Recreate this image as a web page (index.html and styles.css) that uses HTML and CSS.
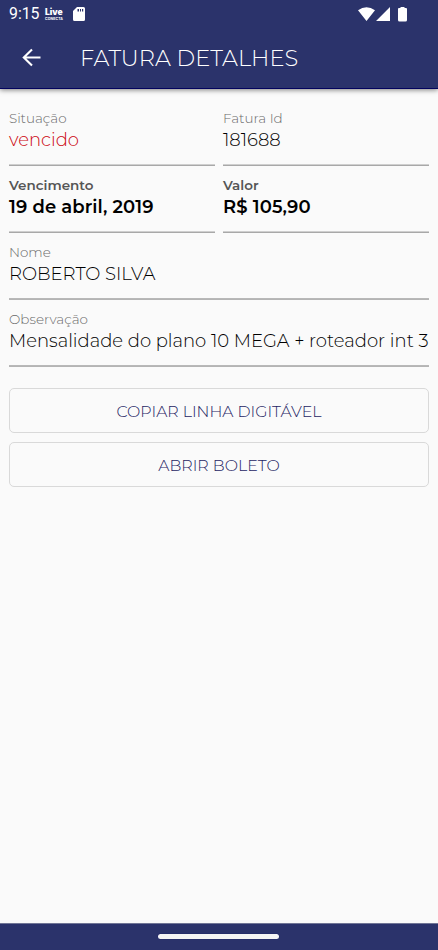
FILE: index.html
```html
<!DOCTYPE html>
<html lang="pt-BR">
<head>
<meta charset="utf-8">
<title>Fatura Detalhes</title>
<link rel="stylesheet" href="styles.css">
</head>
<body>
<div class="screen">
  <header class="header">
    <div class="status">
      <span class="clock">9:15</span>
      <span class="live"><b>Live</b><i>CONECTA</i></span>
      <svg class="sd" viewBox="0 0 12 14"><path fill="#fff" fill-rule="evenodd" d="M4 0h6.500Q12 0 12 1.500v11q0 1.500-1.500 1.500h-9Q0 14 0 12.500V4zM4.500 2v2.500H6V2zM7 2v2.500h1V2zM9 2v2.500h1.200V2z"/></svg>
      <svg class="signals" viewBox="0 0 50 15"><path fill="#fff" d="M0 3.200Q8.500-2.800 17 3.200L8.500 14zM18 14 32 0V14zM40 2q0-1 1-1h1.500V0h4v1H48q1 0 1 1v11q0 1.500-1.500 1.500h-6Q40 14.500 40 13z"/></svg>
    </div>
    <div class="toolbar">
      <svg class="back" viewBox="0 0 20 20"><path d="M10 1.500 1.800 9.500 10 17.500M2 9.500H18.500" fill="none" stroke="#fff" stroke-width="2.100"/></svg>
      <h1 class="title">FATURA DETALHES</h1>
    </div>
  </header>
  <main class="content">
    <section class="fields">
      <div class="field"><span class="label">Situação</span><span class="value overdue">vencido</span></div>
      <div class="field"><span class="label">Fatura Id</span><span class="value">181688</span></div>
      <div class="field strong"><span class="label">Vencimento</span><span class="value">19 de abril, 2019</span></div>
      <div class="field strong"><span class="label">Valor</span><span class="value">R$ 105,90</span></div>
      <div class="field wide"><span class="label">Nome</span><span class="value">ROBERTO SILVA</span></div>
      <div class="field wide"><span class="label">Observação</span><span class="value">Mensalidade do plano 10 MEGA + roteador int 3</span></div>
    </section>
    <div class="actions">
      <button class="btn">COPIAR LINHA DIGITÁVEL</button>
      <button class="btn">ABRIR BOLETO</button>
    </div>
  </main>
  <footer class="nav"><div class="handle"></div></footer>
</div>
</body>
</html>
```
FILE: styles.css
```css
* { box-sizing: border-box; }
body { margin: 0; font-family: Montserrat, Inter, sans-serif; font-weight: 300; background: #fafafa; }
.screen { height: 950px; display: flex; flex-direction: column; overflow: hidden; }
.header { height: 89px; flex: none; background: #2b336b; border-bottom: 1px solid #03035e; box-shadow: 0 1px 5px rgba(0,0,0,.5); color: #fff; }
.status { height: 28px; display: flex; align-items: center; padding: 0 30px 0 9px; }
.clock { font: 400 15.800px/28px Roboto, sans-serif; width: 36px; }
.live { display: flex; flex-direction: column; width: 18px; }
.live b { font: 900 8.500px/9px Inter, sans-serif; }
.live i { font: normal 700 3.500px/4px Inter, sans-serif; letter-spacing: .1px; }
.sd { width: 12px; height: 14px; margin-left: 10px; }
.signals { width: 50px; height: 15px; margin-left: auto; }
.toolbar { height: 60px; display: flex; align-items: center; padding: 0 0 0 22px; }
.back { width: 20px; height: 20px; }
.title { margin: 0 0 0 38px; font-size: 22.500px; line-height: 30px; font-weight: 350; white-space: nowrap; }
.content { flex: 1; padding: 16px 9px 0; }
.fields { display: grid; grid-template-columns: 206px 206px; column-gap: 8px; }
.field { height: 67px; padding-top: 3px; }
.field::after { content: ""; display: block; margin-top: 11px; height: 2px; background: linear-gradient(#cfcfcf 50%, #a8a8a8 50%); }
.wide { grid-column: 1 / 3; }
.wide::after { background: linear-gradient(#b8b8b8 50%, #b4b4b4 50%); }
.label, .value { display: block; width: max-content; white-space: nowrap; }
.label { font-size: 13.500px; line-height: 20px; color: #6a6a6a; }
.value { font-size: 18px; line-height: 25px; color: #000; }
.overdue { color: #cc0610; }
.strong .label { font-weight: 600; color: #555; }
.strong .value { font-weight: 600; letter-spacing: .1px; }
.actions { display: flex; flex-direction: column; gap: 9px; margin-top: 15px; }
.btn { height: 45px; padding: 1px 0 0; border: 1px solid #d9d9d9; border-radius: 5px; background: transparent; color: #1e2463; font-family: inherit; font-size: 15.800px; font-weight: 300; }
.nav { height: 27px; flex: none; background: #2b336b; border-top: 1px solid #707596; display: flex; justify-content: center; padding: 10px 1px 0 0; }
.handle { width: 121px; height: 5px; border-radius: 3px; background: #f5f5f5; box-shadow: 0 0 1px #02025a; }
```
